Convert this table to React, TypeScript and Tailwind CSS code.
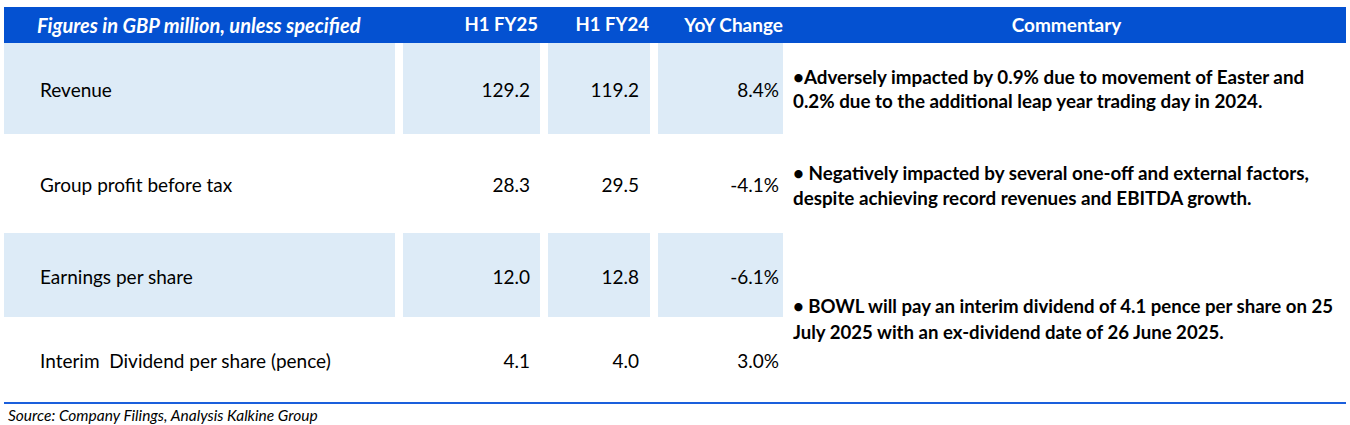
import React from "react";

const rows = [
  { label: "Revenue", a: "129.2", b: "119.2", c: "8.4%", shaded: true },
  { label: "Group profit before tax", a: "28.3", b: "29.5", c: "-4.1%", shaded: false },
  { label: "Earnings per share", a: "12.0", b: "12.8", c: "-6.1%", shaded: true },
  { label: "Interim  Dividend per share (pence)", a: "4.1", b: "4.0", c: "3.0%", shaded: false },
];

export default function App() {
  return (
    <div
      className="w-[1350px] h-[425px] bg-white text-black pt-[7px] pl-[4px] pr-[4px]"
      style={{ fontFamily: "Lato, 'Open Sans', sans-serif" }}
    >
      {/* Header */}
      <div className="grid grid-cols-[395px_145px_110px_133px_1fr] h-[36px] items-center bg-[#0451d1] text-white font-bold text-[19px]">
        <div className="pl-[33px] italic whitespace-nowrap text-[20px]">Figures in GBP million, unless specified</div>
        <div className="text-right pr-[6px] text-[18.5px]">H1 FY25</div>
        <div className="text-right pr-[5px] text-[18.5px]">H1 FY24</div>
        <div className="text-right pr-[4px] whitespace-nowrap">YoY Change</div>
        <div className="text-center">Commentary</div>
      </div>

      {/* Body */}
      <div className="grid grid-cols-[391px_137px_102px_125px_1fr] grid-rows-[91px_99px_84px_85px] gap-x-2 text-[19px]">
        {rows.map((r, i) => {
          const bg = r.shaded ? "bg-[#ddebf7]" : "bg-white";
          return (
            <React.Fragment key={r.label}>
              <div className={`${bg} flex items-center pt-[4px] pl-[36px] whitespace-pre`} style={{ gridRow: i + 1 }}>
                {r.label}
              </div>
              <div className={`${bg} flex items-center justify-end pt-[4px] pr-[10px]`} style={{ gridRow: i + 1 }}>
                {r.a}
              </div>
              <div className={`${bg} flex items-center justify-end pt-[4px] pr-[11px]`} style={{ gridRow: i + 1 }}>
                {r.b}
              </div>
              <div className={`${bg} flex items-center justify-end pt-[4px] pr-[4px]`} style={{ gridRow: i + 1 }}>
                {r.c}
              </div>
            </React.Fragment>
          );
        })}
        <div className="col-start-5 row-start-1 -ml-2 pl-[10px] flex items-center font-bold text-[18.8px] leading-[24px] whitespace-nowrap">
          <p>
            •Adversely impacted by 0.9% due to movement of Easter and
            <br />
            0.2% due to the additional leap year trading day in 2024.
          </p>
        </div>
        <div className="col-start-5 row-start-2 -ml-2 pl-[10px] pt-[2px] flex items-center font-bold text-[18.8px] leading-[25px] whitespace-nowrap">
          <p>
            • Negatively impacted by several one-off and external factors,
            <br />
            despite achieving record revenues and EBITDA growth.
          </p>
        </div>
        <div className="col-start-5 row-start-3 row-span-2 -ml-2 pl-[10px] pt-[2px] flex items-center font-bold text-[18.6px] leading-[26px] whitespace-nowrap">
          <p>
            • BOWL will pay an interim dividend of 4.1 pence per share on 25
            <br />
            July 2025 with an ex-dividend date of 26 June 2025.
          </p>
        </div>
      </div>

      {/* Footer */}
      <div className="h-[2px] bg-[#1a5fdc]" />
      <div className="pl-[4px] pt-[1px] italic text-[15.5px] leading-[20px]">
        Source: Company Filings, Analysis Kalkine Group
      </div>
    </div>
  );
}
